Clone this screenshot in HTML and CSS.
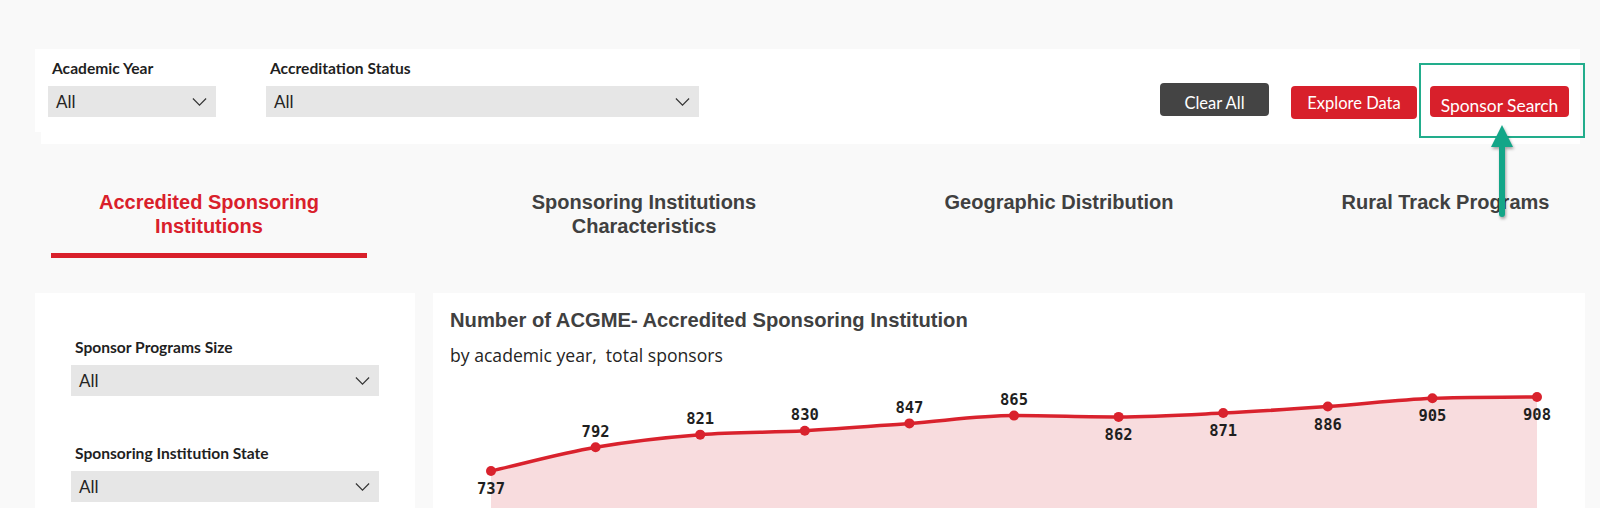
FILE: index.html
```html
<!DOCTYPE html>
<html lang="en">
<head>
<meta charset="utf-8">
<title>Accredited Sponsoring Institutions</title>
<link rel="stylesheet" href="styles.css">
</head>
<body>
<div class="page">
  <header class="filter-bar">
    <div class="filters">
      <div class="filter filter-year">
        <div class="filter-label">Academic Year</div>
        <div class="dropdown"><span>All</span><svg class="chev" viewBox="0 0 16 9"><path d="M0.6 0.6 L8 8 L15.4 0.6" /></svg></div>
      </div>
      <div class="filter filter-status">
        <div class="filter-label">Accreditation Status</div>
        <div class="dropdown"><span>All</span><svg class="chev" viewBox="0 0 16 9"><path d="M0.6 0.6 L8 8 L15.4 0.6" /></svg></div>
      </div>
    </div>
    <div class="actions">
      <button class="btn btn-dark">Clear All</button>
      <button class="btn btn-red btn-explore">Explore Data</button>
      <button class="btn btn-red btn-sponsor">Sponsor Search</button>
    </div>
  </header>

  <div class="callout"></div>
  <svg class="callout-arrow" viewBox="0 0 28 100">
    <rect x="11" y="20" width="6" height="75" rx="3" />
    <polygon points="14,3 3,25 25,25" />
  </svg>

  <nav class="tabs">
    <div class="tab active">Accredited Sponsoring<br>Institutions</div>
    <div class="tab">Sponsoring Institutions<br>Characteristics</div>
    <div class="tab">Geographic Distribution</div>
    <div class="tab tab-last">Rural Track Programs</div>
  </nav>

  <section class="content">
    <aside class="side-panel">
      <div class="side-filter">
        <div class="filter-label">Sponsor Programs Size</div>
        <div class="dropdown"><span>All</span><svg class="chev" viewBox="0 0 16 9"><path d="M0.6 0.6 L8 8 L15.4 0.6" /></svg></div>
      </div>
      <div class="side-filter side-filter-2">
        <div class="filter-label">Sponsoring Institution State</div>
        <div class="dropdown"><span>All</span><svg class="chev" viewBox="0 0 16 9"><path d="M0.6 0.6 L8 8 L15.4 0.6" /></svg></div>
      </div>
    </aside>

    <div class="chart-panel">
      <div class="chart-head">
        <div class="chart-title">Number of ACGME- Accredited Sponsoring Institution</div>
        <div class="chart-subtitle">by academic year,&nbsp; total sponsors</div>
      </div>
      <svg class="chart" viewBox="0 0 1152 140" width="1152" height="140">
        <path class="area" d="M58,100 C92.87,92 127.73,82.26 162.6,76.2 C197.47,70.14 232.33,66.39 267.2,63.65 C302.07,60.91 336.93,61.64 371.8,59.76 C406.67,57.88 441.53,54.93 476.4,52.4 C511.27,49.87 546.13,44.61 581,44.61 C615.87,44.61 650.73,45.91 685.6,45.91 C720.47,45.91 755.33,43.75 790.2,42.02 C825.07,40.29 859.93,37.98 894.8,35.53 C929.67,33.08 964.53,28.9 999.4,27.31 C1034.27,25.72 1069.13,26.44 1104,26.01 L1104,140 L58,140 Z" />
        <path class="line" d="M58,100 C92.87,92 127.73,82.26 162.6,76.2 C197.47,70.14 232.33,66.39 267.2,63.65 C302.07,60.91 336.93,61.64 371.8,59.76 C406.67,57.88 441.53,54.93 476.4,52.4 C511.27,49.87 546.13,44.61 581,44.61 C615.87,44.61 650.73,45.91 685.6,45.91 C720.47,45.91 755.33,43.75 790.2,42.02 C825.07,40.29 859.93,37.98 894.8,35.53 C929.67,33.08 964.53,28.9 999.4,27.31 C1034.27,25.72 1069.13,26.44 1104,26.01" />
        <g class="dots">
          <circle cx="58" cy="100" r="5" />
          <circle cx="162.6" cy="76.2" r="5" />
          <circle cx="267.2" cy="63.65" r="5" />
          <circle cx="371.8" cy="59.76" r="5" />
          <circle cx="476.4" cy="52.4" r="5" />
          <circle cx="581" cy="44.61" r="5" />
          <circle cx="685.6" cy="45.91" r="5" />
          <circle cx="790.2" cy="42.02" r="5" />
          <circle cx="894.8" cy="35.53" r="5" />
          <circle cx="999.4" cy="27.31" r="5" />
          <circle cx="1104" cy="26.01" r="5" />
        </g>
        <g class="labels">
          <text x="58" y="122.5">737</text>
          <text x="162.6" y="65.7">792</text>
          <text x="267.2" y="53.2">821</text>
          <text x="371.8" y="49.3">830</text>
          <text x="476.4" y="41.9">847</text>
          <text x="581" y="34.1">865</text>
          <text x="685.6" y="68.9">862</text>
          <text x="790.2" y="65">871</text>
          <text x="894.8" y="58.5">886</text>
          <text x="999.4" y="50.3">905</text>
          <text x="1104" y="49">908</text>
        </g>
      </svg>
    </div>
  </section>
</div>
</body>
</html>
```

FILE: styles.css
```css
* { box-sizing: border-box; }

html, body {
  margin: 0;
  height: 100%;
  overflow: hidden;
}

body {
  background: #f9f9f9;
  font-family: Lato, "Open Sans", sans-serif;
  color: #252423;
}

.page {
  position: relative;
  width: 1600px;
  height: 508px;
  overflow: hidden;
  padding-top: 49px;
}

/* ---------- top filter bar ---------- */
.filter-bar {
  margin-left: 35px;
  width: 1545px;
  height: 95px;
  display: flex;
  justify-content: space-between;
  padding: 9px 11px 0 13px;
  background:
    linear-gradient(#fff, #fff) 0 0 / 100% 83px no-repeat,
    linear-gradient(#fff, #fff) 6px 0 / calc(100% - 6px) 100% no-repeat;
}

.filters {
  display: flex;
  gap: 50px;
}

.filter-label {
  font-weight: 700;
  font-size: 15.6px;
  line-height: 20px;
  color: #1f1f1f;
  padding-left: 4px;
  white-space: nowrap;
}

.dropdown {
  margin-top: 8px;
  height: 31px;
  background: #e6e6e6;
  display: flex;
  align-items: center;
  justify-content: space-between;
  padding: 0 9px 0 8px;
  font-size: 17px;
  color: #252423;
}

.chev {
  width: 15px;
  height: 8px;
  fill: none;
  stroke: #333;
  stroke-width: 1.3;
}

.filter-year .dropdown { width: 168px; }
.filter-status .dropdown { width: 433px; }

.actions {
  display: flex;
  align-items: flex-start;
  margin-top: 25px;
}

.btn {
  border: none;
  border-radius: 4px;
  color: #fff;
  font-family: Lato, "Open Sans", sans-serif;
  font-size: 16.5px;
  height: 33px;
  padding: 0;
  cursor: pointer;
}

.btn-dark {
  width: 109px;
  background: #444444;
  padding-top: 6px;
}

.btn-red { background: #d8202b; }

.btn-explore {
  width: 126px;
  margin-left: 22px;
  margin-top: 3px;
  padding-top: 1px;
}

.btn-sponsor {
  width: 139px;
  height: 31px;
  margin-left: 13px;
  margin-top: 3px;
  padding-top: 7px;
  font-size: 17.4px;
}

/* ---------- annotation overlay ---------- */
.callout {
  position: absolute;
  left: 1419px;
  top: 63px;
  width: 166px;
  height: 75px;
  border: 2px solid #22ad8c;
}

.callout-arrow {
  position: absolute;
  left: 1488px;
  top: 122px;
  width: 28px;
  height: 100px;
  fill: #13a688;
  filter: drop-shadow(1px 2px 1.5px rgba(0, 0, 0, 0.35));
}

/* ---------- tabs ---------- */
.tabs {
  margin-top: 46px;
  display: grid;
  grid-template-columns: 316px 554px 276px 1fr;
  padding-left: 51px;
}

.tab {
  text-align: center;
  font-family: "Liberation Sans", Arial, sans-serif;
  font-weight: 700;
  font-size: 20px;
  line-height: 24px;
  color: #404040;
}

.tab.active { color: #d9202b; }

.tab.active::after {
  content: "";
  display: block;
  margin-top: 15px;
  height: 5px;
  background: #d9202b;
}

.tab-last { padding-left: 94px; }

/* ---------- content ---------- */
.content {
  margin-top: 35px;
  display: flex;
  gap: 18px;
  padding-left: 35px;
}

.side-panel {
  width: 380px;
  height: 260px;
  background: #fff;
  padding: 44px 0 0 36px;
}

.side-panel .dropdown {
  width: 308px;
}

.side-filter-2 { margin-top: 47px; }

.chart-panel {
  width: 1152px;
  height: 260px;
  background: #fff;
}

.chart-head {
  padding: 16px 0 0 17px;
}

.chart-title {
  font-family: "Liberation Sans", Arial, sans-serif;
  font-weight: 700;
  font-size: 20.2px;
  line-height: 22px;
  color: #404040;
}

.chart-subtitle {
  margin-top: 13px;
  font-family: "Open Sans", Lato, sans-serif;
  font-size: 17.6px;
  line-height: 22px;
  color: #252423;
}

.chart {
  display: block;
  margin-top: 5px;
}

.chart .area { fill: #f8dcde; }

.chart .line {
  fill: none;
  stroke: #d9222d;
  stroke-width: 3.5;
  stroke-linecap: round;
}

.chart .dots circle { fill: #d9222d; }

.chart .labels text {
  font-family: "DejaVu Sans Mono", "Liberation Mono", monospace;
  font-size: 15.5px;
  font-weight: 700;
  fill: #1f1f1f;
  text-anchor: middle;
}
```
